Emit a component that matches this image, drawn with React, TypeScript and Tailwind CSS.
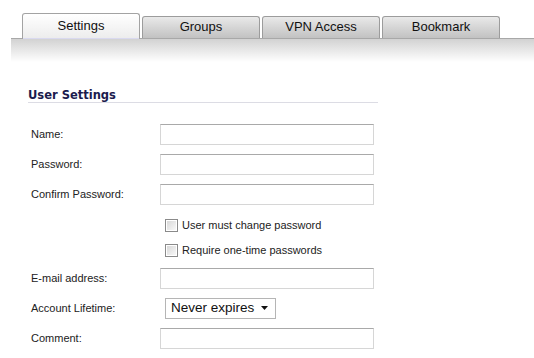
import React from "react"

const tabs = ["Settings", "Groups", "VPN Access", "Bookmark"]

const Field = ({ label, children }: { label: string; children: React.ReactNode }) => (
  <div className="flex h-[30px] items-center">
    <div className="w-[132px] pl-[3px] text-[11px] text-[#222]">{label}</div>
    {children}
  </div>
)

const TextBox = () => (
  <div className="h-[21px] w-[214px] border border-[#d6d6d6] border-t-[#a9a9a9] bg-white" />
)

const Check = ({ label }: { label: string }) => (
  <div className="flex h-[25px] items-center pl-[137px]">
    <div className="flex h-[13px] w-[13px] items-center justify-center border border-[#8a8a8a] bg-white">
      <div className="h-[9px] w-[9px] bg-gradient-to-br from-[#d8d8d8] to-[#f8f8f8]" />
    </div>
    <span className="ml-[4px] text-[11px] text-[#222]">{label}</span>
  </div>
)

export default function App() {
  return (
    <div className="h-[358px] w-[534px] overflow-hidden bg-white" style={{ fontFamily: '"Liberation Sans", Arial, sans-serif' }}>
      <div className="flex h-[38px] items-end gap-[2px] pl-[22px]">
        {tabs.map((t, i) =>
          i === 0 ? (
            <div
              key={t}
              className="relative z-10 -mb-px flex h-[26px] w-[118px] items-center justify-center rounded-t-[3px] border border-b-0 border-[#a3a3a3] bg-gradient-to-b from-white to-[#ececec] pb-[2px] text-[13px] text-[#111]"
            >
              {t}
              <div className="absolute bottom-0 left-0 right-0 h-px bg-[#d9d9ef]" />
            </div>
          ) : (
            <div
              key={t}
              className="flex h-[22px] w-[118px] items-center justify-center rounded-t-[3px] border border-b-0 border-[#9c9c9c] bg-gradient-to-b from-[#e9e9e9] to-[#c2c2c2] pb-[2px] text-[13px] text-[#111]"
            >
              {t}
            </div>
          )
        )}
      </div>
      <div className="ml-[11px] h-[24px] border-t border-[#a8a8a8] bg-gradient-to-b from-[#d2d2d2] to-white" />

      <div className="ml-[28px] w-[350px]">
        <div
          className="mt-[27px] border-b border-[#dcdce4] text-[11.5px] font-bold leading-[13px] text-[#1b1b4d]"
          style={{ fontFamily: '"DejaVu Sans", Verdana, sans-serif' }}
        >
          User Settings
        </div>

        <div className="mt-[16px]">
          <Field label="Name:">
            <TextBox />
          </Field>
          <Field label="Password:">
            <TextBox />
          </Field>
          <Field label="Confirm Password:">
            <TextBox />
          </Field>
          <div className="mt-[4px]">
            <Check label="User must change password" />
            <Check label="Require one-time passwords" />
          </div>
          <Field label="E-mail address:">
            <TextBox />
          </Field>
          <Field label="Account Lifetime:">
            <div className="ml-[5px] flex h-[21px] w-[111px] items-center whitespace-nowrap border border-[#b5b5b5] bg-white pl-[5px] text-[13.5px] text-[#111]">
              <span className="flex-1">Never expires</span>
              <svg width="7" height="4" viewBox="0 0 7 4" className="mr-[7px]">
                <path d="M0 0h7L3.5 4z" fill="#111" />
              </svg>
            </div>
          </Field>
          <Field label="Comment:">
            <TextBox />
          </Field>
        </div>
      </div>
    </div>
  )
}
